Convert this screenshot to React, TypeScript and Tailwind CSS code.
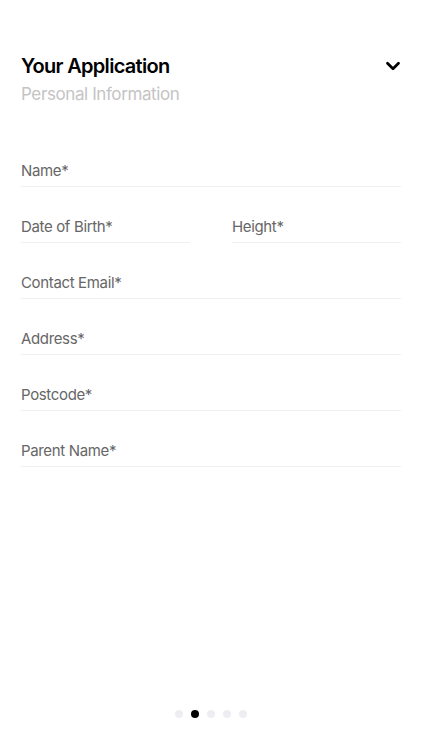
import { ChevronDown } from "lucide-react";

const fields = [
  ["Name*"],
  ["Date of Birth*", "Height*"],
  ["Contact Email*"],
  ["Address*"],
  ["Postcode*"],
  ["Parent Name*"],
];

const Field = ({ label, className = "" }: { label: string; className?: string }) => (
  <div className={`border-b border-[#f0f0f0] pb-[5px] ${className}`}>
    <span className="block text-[15px] leading-[20px] tracking-[-0.35px] text-[#666666]">{label}</span>
  </div>
);

export default function App() {
  return (
    <div
      className="flex min-h-screen flex-col bg-white px-[21px]"
      style={{ fontFamily: "Inter, 'Noto Sans', sans-serif" }}
    >
      {/* HEADER */}
      <div className="pt-[53px]">
        <div className="flex items-center justify-between">
          <h1 className="text-[20px] font-semibold leading-[26px] tracking-[-0.7px] text-black">
            Your Application
          </h1>
          <ChevronDown size={22} strokeWidth={3} className="mr-[-3px] text-black" />
        </div>
        <p className="mt-[4px] text-[17px] leading-[22px] tracking-[-0.4px] text-[#c4c4c4]">
          Personal Information
        </p>
      </div>

      {/* FORM */}
      <div className="mt-[56px] flex flex-col gap-[30px]">
        {fields.map((row) =>
          row.length === 1 ? (
            <Field key={row[0]} label={row[0]} />
          ) : (
            <div key={row[0]} className="flex gap-[42px]">
              <Field label={row[0]} className="w-[169px]" />
              <Field label={row[1]} className="flex-1" />
            </div>
          )
        )}
      </div>

      <div className="flex-1" />

      {/* PAGER */}
      <div className="flex justify-center gap-[8px] pb-[32px]">
        {[0, 1, 2, 3, 4].map((i) => (
          <span
            key={i}
            className={`h-[8px] w-[8px] rounded-full ${i === 1 ? "bg-black" : "bg-[#eeeef2]"}`}
          />
        ))}
      </div>
    </div>
  );
}
